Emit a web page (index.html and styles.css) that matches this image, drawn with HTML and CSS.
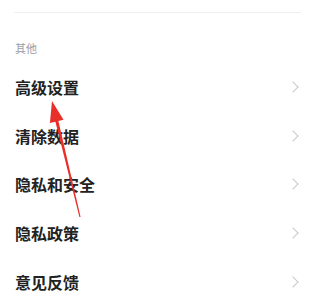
FILE: index.html
```html
<!DOCTYPE html>
<html lang="zh-CN">
<head>
<meta charset="utf-8">
<link rel="stylesheet" href="styles.css">
</head>
<body>
<div class="page">
  <div class="divider"></div>
  <div class="section-title">其他</div>
  <ul class="list">
    <li class="row"><span class="label">高级设置</span><span class="chev"></span></li>
    <li class="row"><span class="label">清除数据</span><span class="chev"></span></li>
    <li class="row"><span class="label">隐私和安全</span><span class="chev"></span></li>
    <li class="row"><span class="label">隐私政策</span><span class="chev"></span></li>
    <li class="row"><span class="label">意见反馈</span><span class="chev"></span></li>
  </ul>
  <svg class="pointer" width="320" height="301" viewBox="0 0 320 301">
    <polygon fill="#e8302a" points="52,101 63.5,119.7 58.4,120.9 80.6,217 79.4,217 55.4,121.7 49.9,123.1"/>
  </svg>
</div>
</body>
</html>
```
FILE: styles.css
```css
html, body {
  margin: 0;
  padding: 0;
  background: #ffffff;
}
.page {
  position: relative;
  width: 320px;
  height: 301px;
  overflow: hidden;
  font-family: "Noto Sans CJK SC", "Noto Sans", sans-serif;
  padding: 0 20px 0 15px;
  box-sizing: border-box;
}
.divider {
  margin: 12px -1px 0 -1px;
  height: 1px;
  background: #efefef;
}
.section-title {
  margin-top: 27px;
  font-size: 11px;
  line-height: 16px;
  color: #9a9aa6;
}
.list {
  list-style: none;
  margin: 6.6px 0 0;
  padding: 0;
}
.row {
  height: 48.75px;
  display: flex;
  align-items: center;
  justify-content: space-between;
}
.label {
  font-size: 16px;
  font-weight: 600;
  color: #222222;
  line-height: 20px;
}
.chev {
  width: 7px;
  height: 7px;
  border-top: 1.5px solid #c8c8c8;
  border-right: 1.5px solid #c8c8c8;
  transform: rotate(45deg);
  margin-right: 3px;
}
.pointer {
  position: absolute;
  left: 0;
  top: 0;
  pointer-events: none;
}
```
